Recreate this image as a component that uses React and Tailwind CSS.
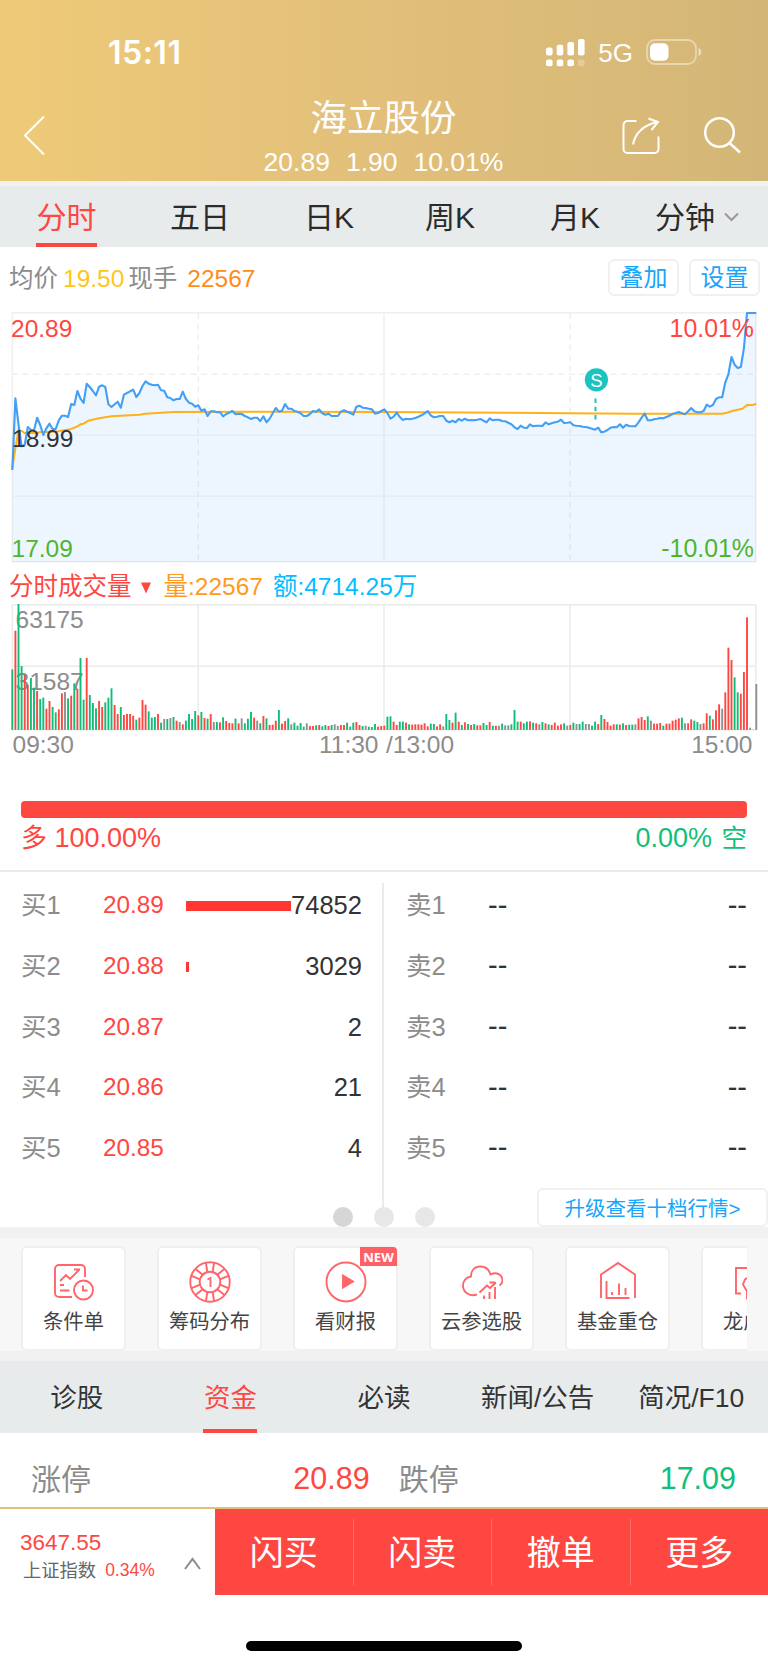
import React from 'react';

// one value per minute, 240 minutes, in thirds of a pixel
const PRICE = [
  495, 280, 358, 424, 420, 366, 374, 376, 338, 360, 390, 370, 356, 372, 372, 346, 332, 332, 336, 297,
  300, 258, 281, 294, 236, 246, 258, 271, 245, 241, 246, 298, 306, 298, 290, 308, 269, 264, 259, 254,
  276, 264, 243, 229, 236, 239, 241, 239, 256, 257, 277, 279, 286, 282, 282, 260, 282, 293, 296, 305,
  301, 317, 313, 333, 319, 319, 322, 321, 334, 327, 323, 318, 328, 326, 327, 333, 337, 342, 338, 338,
  348, 334, 352, 341, 325, 309, 320, 317, 297, 311, 311, 318, 320, 325, 333, 333, 327, 318, 320, 313,
  325, 329, 326, 333, 333, 333, 320, 316, 320, 324, 329, 305, 302, 308, 309, 311, 313, 326, 324, 318,
  313, 324, 341, 335, 323, 336, 345, 341, 343, 341, 339, 335, 331, 325, 318, 331, 337, 335, 333, 333,
  347, 352, 347, 352, 342, 347, 341, 346, 345, 346, 344, 342, 347, 352, 340, 346, 344, 344, 348, 349,
  353, 358, 367, 372, 362, 368, 369, 358, 364, 362, 362, 363, 352, 358, 355, 352, 350, 344, 354, 353,
  352, 361, 362, 363, 365, 366, 368, 371, 374, 368, 382, 380, 375, 368, 366, 367, 358, 368, 359, 363,
  364, 364, 352, 338, 326, 346, 346, 343, 341, 339, 340, 336, 332, 327, 324, 321, 325, 328, 319, 309,
  319, 322, 322, 318, 299, 305, 300, 282, 277, 277, 232, 208, 156, 179, 189, 186, 130, 24, 24, 24, 24,
];

const AVERAGE = [
  [0, 490], [1, 430], [2, 375], [3, 378], [4, 384], [8, 384], [9, 381], [14, 380], [19, 372], [21, 364],
  [22, 358], [23, 356], [24.5, 347], [28, 340], [32, 334], [41, 329], [43, 326], [52, 321], [78, 320],
  [120, 321], [160, 323], [200, 326], [229, 326], [230.5, 323], [232.5, 317], [235.5, 311], [237, 300],
  [239, 300], [240, 296],
];

// r = up, g = down, x = unchanged; the number is the top of the bar
const VOLUME = `g313 r197 g117 g303 r330 r360 g339 g368 r378 g402 g398 r431 r408 g426 g442 r433 r385 x381 g400 r392
g355 r371 g279 g404 r279 g390 g414 g430 r408 r426 g412 g398 g370 r420 r447 g426 r450 r447 r447 r452
g464 r458 r405 r419 g439 g458 g456 r447 g473 x462 g462 x459 g456 r467 x471 r478 g467 g447 g462 g438
r451 g441 r459 g461 r447 x471 g471 r472 g457 r468 r474 r475 g461 r475 x460 g475 g461 g441 r458 x467
g475 r453 g460 r480 r479 r467 g435 r476 r468 g460 x478 g473 g482 g474 g485 x475 r483 r483 g481 r480
g484 g480 r483 g480 x478 x483 r480 r480 g473 g485 g473 r471 r480 g483 x482 g485 g486 g477 r485 r483
r482 g455 g454 r470 r480 g470 g470 r473 g478 r479 r478 r478 r479 r475 r484 g476 g477 r484 r478 x484
g447 g465 r473 g443 r470 g480 r472 g477 r480 g477 r481 r481 g474 g480 r471 g482 r482 x482 g476 x481
x481 g478 g435 g470 r470 g475 g470 r469 g473 r475 x478 g471 r475 g478 r480 r473 r482 r478 g475 x482
r480 g473 x477 g477 g470 x477 x477 g482 g470 r477 g450 r462 r471 r482 r478 g478 r479 g475 r480 g479
g479 x478 r460 r456 r465 g454 x467 r476 r476 r474 g482 r476 r476 r467 r464 r460 g458 x475 r475 r463
g467 g471 x477 r475 r445 g452 r463 r436 r418 x431 r382 r248 r285 g337 g382 r386 r321 r157 x488 x494
x357`.split(/\s+/);

const BAR_COLORS = { r: '#ff4742', g: '#10bd78', x: '#909090' };

const periods = [
  { label: '五日', width: 'w-[134px]' },
  { label: '日K', width: 'w-[121px]' },
  { label: '周K', width: 'w-[125px]' },
  { label: '月K', width: 'w-[105px]' },
];

const orders = [
  { level: 1, price: '20.89', amount: '74852', bar: 105 },
  { level: 2, price: '20.88', amount: '3029', bar: 3 },
  { level: 3, price: '20.87', amount: '2', bar: 0 },
  { level: 4, price: '20.86', amount: '21', bar: 0 },
  { level: 5, price: '20.85', amount: '4', bar: 0 },
];

const xAt = (i) => 12.3 + i * 3.1;

const StatusBar = () => (
  <div className="flex h-[90px] items-start justify-between pl-[108px] pr-[65px] pt-[33px]">
    <div className="font-['Inter'] text-[32px] font-semibold leading-[40px] tracking-[0.5px]">15:11</div>
    <div className="flex h-[40px] items-center">
      <svg width="40" height="28" viewBox="0 0 40 28" fill="#fff">
        <rect x="0" y="8.5" width="6.6" height="8" rx="2" />
        <rect x="10.700" y="5.8" width="6.6" height="10.7" rx="2" />
        <rect x="21.4" y="2.9" width="6.6" height="13.6" rx="2" />
        <rect x="32" y="0" width="6.6" height="16.5" rx="2" />
        <rect x="0" y="20.5" width="6.6" height="6.8" rx="2" />
        <rect x="10.7" y="20.5" width="6.6" height="6.8" rx="2" />
        <rect x="21.4" y="20.5" width="6.6" height="6.8" rx="2" />
        <rect x="32" y="20.5" width="6.6" height="6.8" rx="2" opacity="0.25" />
      </svg>
      <span className="ml-3 text-[26px] leading-[40px]">5G</span>
      <svg className="ml-[12px]" width="58" height="28" viewBox="0 0 58 28">
        <rect x="2" y="1" width="49" height="24" rx="8" fill="none" stroke="#fff" strokeOpacity="0.42" strokeWidth="1.8" />
        <rect x="5" y="4.3" width="18.5" height="17.5" rx="5" fill="#fff" />
        <path d="M53.500 9c2 .6 2.800 2.100 2.800 4s-.8 3.400-2.800 4z" fill="#fff" fillOpacity="0.5" />
      </svg>
    </div>
  </div>
);

const TitleBar = () => (
  <div className="flex h-[90px] justify-between">
    <svg className="ml-[22px] mt-[24px] w-[160px]" width="160" height="44" viewBox="0 0 160 44" fill="none" stroke="#fff" strokeWidth="2">
      <path d="M22 2.500L3 21.500L22 40.500" />
    </svg>
    <div className="flex flex-col items-center">
      <h1 className="mt-[8px] h-[42px] text-[36.500px] font-normal leading-[42px]">海立股份</h1>
      <div className="mt-[7px] flex gap-[16px] text-[26.500px] leading-[31px]">
        <span>20.89</span>
        <span>1.90</span>
        <span>10.01%</span>
      </div>
    </div>
    <div className="mr-[26px] flex w-[157px] justify-end gap-[43px] pt-[25px]">
      <svg width="40" height="42" viewBox="0 0 40 42" fill="none" stroke="#fff" strokeWidth="2">
        <path d="M15.500 6H6.500a4 4 0 0 0-4 4v24a4 4 0 0 0 4 4h27a4 4 0 0 0 4-4V21.500" />
        <path d="M12 29.500C14 19 22 10.500 36 7M27.500 3.500L37 7l-6.500 8" />
      </svg>
      <svg width="38" height="42" viewBox="0 0 38 42" fill="none" stroke="#fff" strokeWidth="2.500">
        <circle cx="15.500" cy="17.500" r="14.300" />
        <path d="M25.500 28L36 37.500" />
      </svg>
    </div>
  </div>
);

const PeriodTabs = () => (
  <nav className="flex h-[61px] bg-[#e7ebec] pl-[36px] text-[30px] leading-[64px] text-[#2b2b2b]">
    <div className="mr-[73px] flex h-[61px] w-[61px] flex-col items-center border-b-[4px] border-[#ff4742] text-[#ff4742]">分时</div>
    {periods.map((p) => (
      <div key={p.label} className={`${p.width} shrink-0 whitespace-nowrap`}>{p.label}</div>
    ))}
    <div className="flex shrink-0 gap-[9px] whitespace-nowrap">
      <span>分钟</span>
      <svg className="mt-[26px]" width="15" height="10" viewBox="0 0 15 10" fill="none" stroke="#999" strokeWidth="2">
        <path d="M1 1.500L7.500 8L14 1.500" />
      </svg>
    </div>
  </nav>
);

const Summary = () => (
  <div className="flex h-[58px] items-center pl-[9px] pr-[8px] pt-[7px] text-[24.500px] text-[#8c8c8c]">
    <span>均价</span>
    <span className="ml-[5px] text-[#ffc61a]">19.50</span>
    <span className="ml-[4px]">现手</span>
    <span className="ml-[10px] text-[#ff8c1a]">22567</span>
    <div className="-mt-[4px] ml-auto flex gap-[10px] text-[24px] leading-[34px] text-[#18a5fb]">
      <button className="h-[37px] w-[71px] rounded-[6px] border-2 border-[#f0f0f0]">叠加</button>
      <button className="h-[37px] w-[71px] rounded-[6px] border-2 border-[#f0f0f0]">设置</button>
    </div>
  </div>
);

const PriceChart = () => {
  const line = PRICE.map((v, i) => `${xAt(i).toFixed(1)},${(v / 3).toFixed(1)}`).join(' ');
  const average = AVERAGE.map(([i, v]) => `${xAt(i).toFixed(1)},${(v / 3).toFixed(1)}`).join(' ');

  return (
    <svg className="block" width="768" height="260" viewBox="0 0 768 260" fontSize="24.500">
      <g fill="none" stroke="#efeff0" strokeWidth="1.500">
        <rect x="12.300" y="7.800" width="743.500" height="249" />
        <path d="M384 8V257" />
        <path d="M12 130.300H756M12 191.300H756" stroke="#f6f6f6" />
        <path d="M12 69.300H756M198.300 8V257M570 8V257" strokeDasharray="6 4.500" />
      </g>
      <polygon points={`12.3,257 ${line} 756,257`} fill="#3296f5" fillOpacity="0.085" />
      <polyline points={average} fill="none" stroke="#ffb11b" strokeWidth="2" />
      <polyline points={line} fill="none" stroke="#439ff5" strokeWidth="2.100" strokeLinejoin="round" />
      <text x="11" y="32" fill="#ff4742">20.89</text>
      <text x="12" y="141.700" fill="#333">18.99</text>
      <text x="11.500" y="251.500" fill="#4fb52d">17.09</text>
      <text x="754" y="32" fill="#ff4742" textAnchor="end" fontSize="24.900">10.01%</text>
      <text x="754" y="251.500" fill="#4fb52d" textAnchor="end" fontSize="24.900">-10.01%</text>
      <circle cx="596.400" cy="74.800" r="11.600" fill="#1cc4c1" />
      <text x="596.400" y="81.500" fill="#fff" fontSize="18.500" textAnchor="middle">S</text>
      <path d="M595.500 93.500V115" stroke="#1cc4c1" strokeWidth="2" strokeDasharray="4.500 3.700" />
    </svg>
  );
};

const VolumeChart = () => (
  <section>
    <div className="flex h-[37px] items-center pl-[9px] pt-[7px] text-[24.500px] leading-[30px]">
      <span className="text-[#ff4742]">分时成交量</span>
      <svg className="ml-[9px] mt-[2px]" width="10" height="12" viewBox="0 0 10 12" fill="#ff4742">
        <path d="M0 0.500H10L5 11.500z" />
      </svg>
      <span className="ml-[13px] text-[#ff9a20]">量:22567</span>
      <span className="ml-[10px] text-[#05bdff]">额:4714.25万</span>
    </div>
    <svg className="block" width="768" height="163" viewBox="0 37 768 163" fontSize="24.500" fill="#8c8c8c">
      <g fill="none" stroke="#ebebeb" strokeWidth="1.500">
        <rect x="12.300" y="39.800" width="743.500" height="125" />
        <path d="M12 101.200H756M198.300 40V165M384 40V165M570 40V165" />
      </g>
      <text x="15.500" y="63">63175</text>
      <text x="15.500" y="124.600">31587</text>
      {VOLUME.map((bar, i) => {
        const top = Number(bar.slice(1)) / 3;
        return <rect key={i} x={xAt(i) - 0.95} y={top} width="1.9" height={164.9 - top} fill={BAR_COLORS[bar[0]]} />;
      })}
      <text x="12.500" y="188.300">09:30</text>
      <text x="319" y="188.300">11:30</text>
      <text x="386" y="188.300">/13:00</text>
      <text x="752.500" y="188.300" textAnchor="end">15:00</text>
    </svg>
  </section>
);

const Strength = () => (
  <section className="h-[107px] border-b-2 border-[#ebebeb] px-[21px] pt-[36px]">
    <div className="h-[17px] rounded-[4px] bg-[#ff4742]" />
    <div className="mt-[3px] flex justify-between text-[27px] leading-[34px]">
      <span className="text-[#ff4742]"><span className="text-[26px]">多</span> 100.00%</span>
      <span className="text-[#10bf79]">0.00% <span className="ml-[2px] text-[25.500px]">空</span></span>
    </div>
  </section>
);

const OrderBook = () => (
  <section className="relative h-[355px]">
    <div className="flex h-[336px]">
      <div className="mt-[11px] w-[384px] border-r-2 border-[#ebebeb]">
        {orders.map((o) => (
          <div key={o.level} className="-mt-[8px] mb-[8px] flex h-[60.700px] items-center pl-[21px] pr-[20px] text-[25.500px]">
            <span className="w-[82px] text-[#8c8c8c]">买{o.level}</span>
            <span className="w-[83px] text-[24.300px] text-[#ff4742]">{o.price}</span>
            <span className="mt-[2px] h-[10px] bg-[#ff3631]" style={{ width: o.bar }} />
            <span className="ml-auto text-[25.500px] text-[#333]">{o.amount}</span>
          </div>
        ))}
      </div>
      <div className="mt-[11px] flex-1">
        {orders.map((o) => (
          <div key={o.level} className="-mt-[8px] mb-[8px] flex h-[60.700px] items-center pl-[22px] pr-[21px] text-[25.500px] text-[#333]">
            <span className="w-[82px] text-[#8c8c8c]">卖{o.level}</span>
            <span className="text-[29px]">--</span>
            <span className="ml-auto text-[29px]">--</span>
          </div>
        ))}
      </div>
    </div>
    <div className="absolute bottom-0 left-[333px] flex gap-[21px]">
      <span className="size-[20px] rounded-full bg-[#d6d6d6]" />
      <span className="size-[20px] rounded-full bg-[#e7e7e7]" />
      <span className="size-[20px] rounded-full bg-[#e7e7e7]" />
    </div>
    <button className="absolute bottom-0 right-0 h-[39px] w-[231px] whitespace-nowrap rounded-[6px] border-2 border-[#f0f0f0] bg-white text-[20.500px] leading-[38px] text-[#18a5fb]">
      升级查看十档行情&gt;
    </button>
  </section>
);

const ConditionIcon = () => (
  <>
    <path d="M19 36H6a4 4 0 0 1-4-4V8a4 4 0 0 1 4-4h22a4 4 0 0 1 4 4v8M7 20l6-6 4 4 9-9M21 8.500h6M7 24h4M7 29.500h9.500" />
    <circle cx="30.500" cy="29" r="9.500" />
    <path d="M30 24.500v5h4.500" />
  </>
);

// rim notches sit in six pairs, 60 degrees apart
const ChipIcon = () => (
  <>
    <circle cx="21" cy="21" r="19.700" />
    <circle cx="21" cy="21" r="10.300" />
    {[0, 60, 120, 180, 240, 300].map((a) => (
      <path key={a} d="M18.300 11L17 2M23.700 11L25 2" transform={`rotate(${a} 21 21)`} />
    ))}
    <path d="M18.500 18.500l3-1.500v9" />
  </>
);

const PlayIcon = () => (
  <>
    <circle cx="21" cy="21" r="19.500" />
    <path d="M18 14.500L28 20.500L18 26.500z" fill="#ff656b" />
  </>
);

const CloudIcon = () => (
  <>
    <path d="M16 33.500c-7 2.500-14-2-14-9 0-5 3.500-8.500 8-9C10 9 14 5.500 19.500 5.500c5 0 8.500 3 10 8 6-3 12 0 12 6 0 2-1 3.500-3 5" />
    <path d="M18.500 31.500l7.500-7 3 2.500 6-5.500M28.500 21.500h6M23 34.500v3.500M28.500 31v7M34 26v12" />
  </>
);

const FundIcon = () => (
  <>
    <path d="M4 37V13.500L21 2l17 11.500V37" />
    <path d="M9.500 20v17h23M15 31v3M22 22.500V34M28.500 27v7" />
  </>
);

const RankIcon = () => (
  <>
    <path d="M8 32.500H3V7h30" />
    <path d="M18 14.500l-6 4-2 5 4 7 5 1M14 29v8l7-4" />
  </>
);

const tools = [
  { label: '条件单', Icon: ConditionIcon },
  { label: '筹码分布', Icon: ChipIcon },
  { label: '看财报', Icon: PlayIcon, isNew: true },
  { label: '云参选股', Icon: CloudIcon },
  { label: '基金重仓', Icon: FundIcon },
  { label: '龙虎榜', Icon: RankIcon },
];

const Tools = () => (
  <section className="border-b-[10px] border-t-[11px] border-[#f1f1f1] bg-[#f7f7f7] px-[21px]">
    <div className="flex h-[113px] gap-[31px] overflow-hidden pt-[8px]">
      {tools.map(({ label, Icon, isNew }) => (
        <div key={label} className="relative flex h-[105px] w-[105px] shrink-0 flex-col items-center rounded-[6px] border-2 border-[#efefef] bg-white pt-[13px]">
          <svg width="42" height="42" viewBox="0 0 42 42" fill="none" stroke="#ff656b" strokeWidth="1.900">
            <Icon />
          </svg>
          <span className="mt-[5px] whitespace-nowrap text-[20.300px] leading-[29px] text-[#444]">{label}</span>
          {isNew && (
            <span className="absolute -right-[1px] -top-[1px] h-[19px] w-[37px] rounded-tr-[4px] bg-[#ff6066] text-center font-['Open_Sans'] text-[13px] font-bold leading-[20px] text-white">
              NEW
            </span>
          )}
        </div>
      ))}
    </div>
  </section>
);

const InfoTabs = () => (
  <nav className="grid h-[72px] grid-cols-5 bg-[#e8ebec] text-center text-[26.500px] leading-[74px] text-[#333]">
    <span>诊股</span>
    <span className="mx-auto h-[72px] w-[54px] border-b-[4px] border-[#ff4742] text-[#ff4742]">资金</span>
    <span>必读</span>
    <span className="whitespace-nowrap">新闻/公告</span>
    <span>简况/F10</span>
  </nav>
);

const Footer = () => (
  <footer className="flex h-[88px] border-t-2 border-[#e3c07a]">
    <div className="flex w-[215px] items-center justify-between pl-[20px] pr-[14px]">
      <div className="pt-[8px]">
        <div className="text-[22.500px] leading-[28px] text-[#ff4742]">3647.55</div>
        <div className="flex items-center gap-[9px] pl-[3px] text-[18.300px] leading-[27px] text-[#666]">
          <span>上证指数</span>
          <span className="text-[17.500px] text-[#ff4742]">0.34%</span>
        </div>
      </div>
      <svg className="mt-[22px]" width="17" height="13" viewBox="0 0 17 13" fill="none" stroke="#8c8c8c" strokeWidth="2">
        <path d="M1 12L8.500 2L16 12" />
      </svg>
    </div>
    <div className="flex flex-1 items-center bg-[#ff4742] text-[34px] leading-[68px] text-white">
      <button className="h-[66px] flex-1 border-r border-[#ff6b66]">闪买</button>
      <button className="h-[66px] flex-1 border-r border-[#ff6b66]">闪卖</button>
      <button className="h-[66px] flex-1 border-r border-[#ff6b66]">撤单</button>
      <button className="h-[66px] flex-1">更多</button>
    </div>
  </footer>
);

const App = () => {
  return (
    <div className="h-[1665px] w-[768px] overflow-hidden bg-white font-['Liberation_Sans','Noto_Sans_CJK_SC',sans-serif]">
      <header className="h-[181px] bg-linear-to-r from-[#eeca78] via-[#e2bf7a] to-[#d3b677] text-white">
        <StatusBar />
        <TitleBar />
      </header>
      <div className="h-[5px] bg-[#f1f1f1]" />
      <PeriodTabs />
      <Summary />
      <PriceChart />
      <VolumeChart />
      <Strength />
      <OrderBook />
      <Tools />
      <InfoTabs />
      <div className="flex h-[74px] items-center pl-[31px] pr-[32px] pt-[18px] text-[30px]">
        <span className="text-[#8c8c8c]">涨停</span>
        <span className="ml-auto text-[30.500px] text-[#ff4742]">20.89</span>
        <span className="ml-[29px] w-[180px] text-[#8c8c8c]">跌停</span>
        <span className="ml-[81px] text-[30.500px] text-[#10bf79]">17.09</span>
      </div>
      <Footer />
      <div className="mx-auto mt-[46px] h-[10px] w-[276px] rounded-full bg-black" />
    </div>
  );
};

export default App;
